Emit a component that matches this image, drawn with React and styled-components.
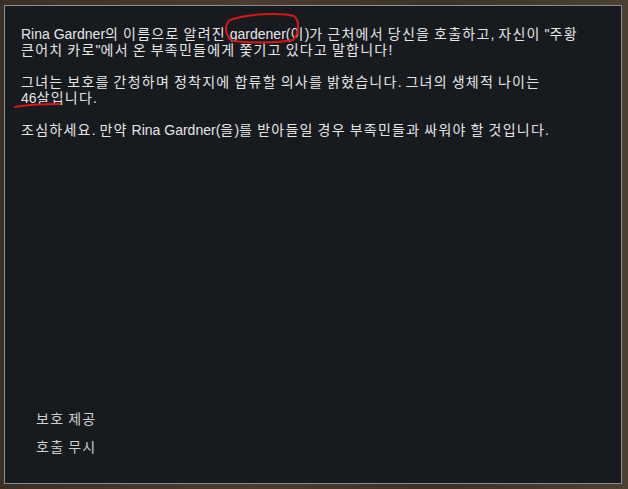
import React from "react";
import styled, { createGlobalStyle } from "styled-components";

const Global = createGlobalStyle`
  html, body { margin: 0; padding: 0; }
  body {
    width: 628px;
    height: 489px;
    overflow: hidden;
    background: linear-gradient(90deg, #3a2f27 0%, #4a3c30 40%, #3b3128 70%, #4b4134 100%);
    font-family: "Liberation Sans", "Noto Sans CJK KR", sans-serif;
  }
`;

const Stage = styled.div`
  position: relative;
  width: 628px;
  height: 489px;
  padding: 5px 6px 5px 4px;
  box-sizing: border-box;
`;

const Panel = styled.div`
  box-sizing: border-box;
  width: 618px;
  height: 479px;
  background: #171a1f;
  border: 1px solid #8d8d8f;
  padding: 20px 16px 27px 16px;
  display: flex;
  flex-direction: column;
  justify-content: space-between;
`;

const Body = styled.div`
  display: flex;
  flex-direction: column;
  gap: 16px;
`;

const Para = styled.p`
  margin: 0;
  color: #e6e6e6;
  font-size: 14px;
  line-height: 16px;
  white-space: nowrap;
`;

const Hangul = styled.span`
  letter-spacing: 1.25px;
`;

const Options = styled.div`
  display: flex;
  flex-direction: column;
  gap: 11px;
  padding-left: 15px;
`;

const Option = styled.div`
  color: #cfd0d2;
  font-size: 14px;
  line-height: 17px;
`;

const Ink = styled.svg`
  position: absolute;
  left: 0;
  top: 0;
  pointer-events: none;
`;

function K({ children }) {
  const parts = String(children).split(/([\uAC00-\uD7A3]+)/);
  return parts.map((p, i) =>
    /[\uAC00-\uD7A3]/.test(p) ? <Hangul key={i}>{p}</Hangul> : <React.Fragment key={i}>{p}</React.Fragment>
  );
}

export default function App() {
  return (
    <>
      <Global />
      <Stage>
        <Panel>
          <Body>
            <Para>
              <K>{'Rina Gardner의 이름으로 알려진 gardener(이)가 근처에서 당신을 호출하고, 자신이 "주황'}</K>
              <br />
              <K>{'큰어치 카로"에서 온 부족민들에게 쫓기고 있다고 말합니다!'}</K>
            </Para>
            <Para>
              <K>그녀는 보호를 간청하며 정착지에 합류할 의사를 밝혔습니다. 그녀의 생체적 나이는</K>
              <br />
              <K>46살입니다.</K>
            </Para>
            <Para>
              <K>조심하세요. 만약 Rina Gardner(을)를 받아들일 경우 부족민들과 싸워야 할 것입니다.</K>
            </Para>
          </Body>
          <Options>
            <Option>
              <K>보호 제공</K>
            </Option>
            <Option>
              <K>호출 무시</K>
            </Option>
          </Options>
        </Panel>
        <Ink width="628" height="489" viewBox="0 0 628 489">
          <path
            d="M230 20 C 248 14, 280 12, 294 16 C 300 21, 299 34, 293 40 C 276 43, 250 43, 233 41 C 226 37, 223 26, 230 20 Z"
            fill="none"
            stroke="#d81818"
            strokeWidth="2"
            strokeLinecap="round"
          />
          <path
            d="M15 107 C 30 104, 48 104, 60 104"
            fill="none"
            stroke="#d81818"
            strokeWidth="2"
            strokeLinecap="round"
          />
        </Ink>
      </Stage>
    </>
  );
}
